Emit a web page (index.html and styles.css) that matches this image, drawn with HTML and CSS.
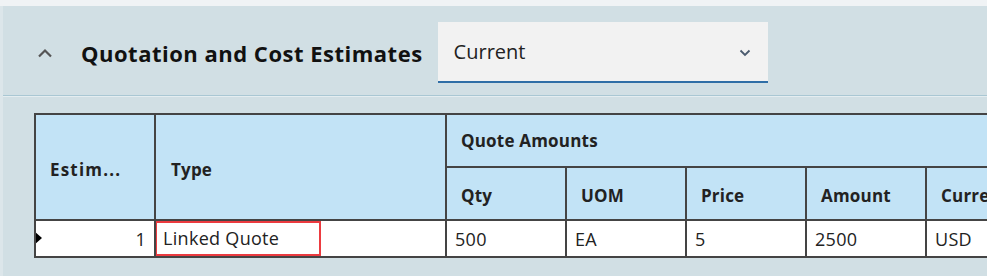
FILE: index.html
```html
<!DOCTYPE html>
<html>
<head>
<meta charset="utf-8">
<link rel="stylesheet" href="styles.css">
</head>
<body>
<div class="topstrip"></div>
<section class="panel">
  <header class="panel-head">
    <svg class="chev-up" width="16" height="10" viewBox="0 0 16 10"><path d="M2 8.5 L8 2.5 L14 8.5" fill="none" stroke="#555" stroke-width="2.2"/></svg>
    <h2 class="title">Quotation and Cost Estimates</h2>
    <div class="select">
      <span class="select-text">Current</span>
      <svg class="chev-down" width="12" height="8" viewBox="0 0 12 8"><path d="M1.5 1.5 L6 6 L10.5 1.5" fill="none" stroke="#4a5a6e" stroke-width="1.8"/></svg>
    </div>
  </header>
  <div class="grid-wrap">
    <table class="grid">
      <colgroup>
        <col class="c-est"><col class="c-type"><col class="c-n"><col class="c-n"><col class="c-n"><col class="c-n"><col class="c-n">
      </colgroup>
      <thead>
        <tr class="h1">
          <th rowspan="2" class="th-span th-est">Estim...</th>
          <th rowspan="2" class="th-span th-type">Type</th>
          <th colspan="5" class="group">Quote Amounts</th>
        </tr>
        <tr class="h2">
          <th>Qty</th><th>UOM</th><th>Price</th><th>Amount</th><th>Currency</th>
        </tr>
      </thead>
      <tbody>
        <tr class="row">
          <td class="num"><span class="marker"></span>1</td>
          <td class="type-cell"><span class="edit-box">Linked Quote</span></td>
          <td>500</td><td>EA</td><td>5</td><td>2500</td><td>USD</td>
        </tr>
      </tbody>
    </table>
  </div>
</section>
</body>
</html>
```
FILE: styles.css
```css
html, body {
  margin: 0;
  padding: 0;
}
body {
  background: #d1dfe4;
  font-family: "Open Sans", "Noto Sans", sans-serif;
  color: #111;
  width: 987px;
  height: 276px;
  overflow: hidden;
}
.topstrip {
  height: 6px;
  background: #f0f3f5;
}
.panel {
  background: #d1dfe4;
  border-left: 3px solid #dce6ea;
  height: 270px;
  overflow: hidden;
}
.panel-head {
  height: 85px;
  padding-top: 4px;
  border-bottom: 1px solid #a9c7d3;
  display: flex;
  align-items: center;
  padding-left: 34px;
  box-shadow: 0 1px 0 #e4edf0;
}
.chev-up {
  flex: none;
}
.title {
  margin: 0 0 0 28px;
  font-size: 22px;
  letter-spacing: 0.5px;
  font-weight: 700;
  color: #111;
  white-space: nowrap;
}
.select {
  margin-left: 15px;
  width: 297px;
  height: 59px;
  background: #f2f2f2;
  border-bottom: 2px solid #2f6ea6;
  display: flex;
  align-items: center;
  justify-content: space-between;
  padding: 0 17px 0 16px;
  flex: none;
}
.select-text {
  font-size: 20px;
  color: #222;
}
.chev-down {
  margin-top: 2px;
}
.grid-wrap {
  padding: 17px 0 0 31px;
}
.grid {
  border-collapse: collapse;
  table-layout: fixed;
  width: 1011px;
  font-size: 18px;
  letter-spacing: 0.3px;
}
.c-est { width: 120px; }
.c-type { width: 291px; }
.c-n { width: 120px; }
.grid th, .grid td {
  border: 2px solid #444;
  text-align: left;
  white-space: nowrap;
  overflow: hidden;
  padding: 0 0 0 14px;
}
.grid th {
  background: #c2e3f6;
  font-weight: 700;
  font-size: 17px;
  letter-spacing: 0.2px;
  color: #222;
}
.h1 th { height: 51px; }
.h2 th { height: 47px; padding-top: 4px; }
.grid .th-span { padding-top: 4px; }
.grid .th-est { letter-spacing: 1.2px; }
.grid .th-type { padding-left: 15px; }
.row td {
  background: #fff;
  height: 33px;
  padding-left: 8px;
  color: #222;
}
.row td.num {
  text-align: right;
  padding-right: 8px;
  position: relative;
}
.marker {
  position: absolute;
  left: -1px;
  top: 11px;
  border-left: 7px solid #000;
  border-top: 6px solid transparent;
  border-bottom: 6px solid transparent;
}
.row td.type-cell {
  padding: 0;
}
.edit-box {
  display: block;
  width: 156px;
  height: 31px;
  line-height: 31px;
  border: 2px solid #ec3b40;
  padding-left: 6px;
  margin-left: -1px;
}
```
